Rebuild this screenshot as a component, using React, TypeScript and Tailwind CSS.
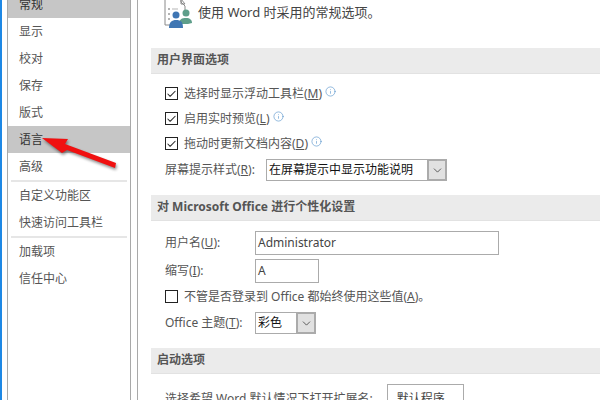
import React from 'react';
import { ChevronDown, Check, Info } from 'lucide-react';

const FONT = 'font-["Noto_Sans","Noto_Sans_CJK_SC",sans-serif]';

function NavItem({ label, active }: { label: string; active?: boolean }) {
  return (
    <div className={`h-[27px] pl-[11px] flex items-center text-[12px] ${active ? 'bg-[#c6c6c6] text-[#333]' : 'text-[#555]'}`}>
      {label}
    </div>
  );
}

function NavSep() {
  return <div className="h-[2px] mx-[3px] bg-[#e6e6e6]" />;
}

function SectionHead({ children }: { children: React.ReactNode }) {
  return (
    <div className="h-[26px] pl-[6px] pb-[1px] flex items-center bg-[#ebebeb] border-b border-[#e2e2e2] text-[12px] font-bold text-[#555]">
      {children}
    </div>
  );
}

function CheckRow({ label, checked, tip }: { label: React.ReactNode; checked?: boolean; tip?: boolean }) {
  return (
    <div className="h-[25px] flex items-center pl-[14px]">
      <div className="w-[13px] h-[13px] border border-[#222] flex items-center justify-center bg-white">
        {checked && <Check size={12} strokeWidth={2.2} className="text-[#222]" />}
      </div>
      <span className="ml-[6px] text-[12px] text-[#555]">{label}</span>
      {tip && <Info size={11} strokeWidth={1.2} className="ml-[3px] mb-[5px] text-[#3f84c4]" />}
    </div>
  );
}

function Select({ text, width }: { text: string; width: string }) {
  return (
    <div className={`h-[22px] flex items-stretch ${width}`}>
      <div className="flex-1 border-y border-l border-[#ababab] flex items-center pl-[2px] text-[12px] text-[#111]">{text}</div>
      <div className="w-[20px] bg-[#e1e1e1] border-2 border-[#ababab] flex items-center justify-center">
        <ChevronDown size={13} strokeWidth={1.4} className="text-[#333]" />
      </div>
    </div>
  );
}

export default function App() {
  return (
    <div className={`relative w-[600px] h-[400px] overflow-hidden bg-white flex ${FONT}`}>
      <div className="w-[2px] bg-[#1e88e5]" />
      {/* left nav */}
      <div className="ml-[5px] w-[124px] h-[400px] border-x border-[#a9a9a9]">
        <div className="-mt-[9px]">
          <NavItem label="常规" active />
          <NavItem label="显示" />
          <NavItem label="校对" />
          <NavItem label="保存" />
          <NavItem label="版式" />
          <NavItem label="语言" active />
          <NavItem label="高级" />
          <NavSep />
          <NavItem label="自定义功能区" />
          <NavItem label="快速访问工具栏" />
          <NavSep />
          <NavItem label="加载项" />
          <NavItem label="信任中心" />
        </div>
      </div>
      {/* options panel */}
      <div className="ml-[6px] flex-1 h-[400px] border-l border-[#a9a9a9] pl-[13px] overflow-hidden">
        <div className="h-[48px] flex items-start">
          <svg width="28" height="30" viewBox="0 0 28 30" className="ml-[13px] -mt-[1px]">
            <path d="M1 0V26H6M17 0V3L21 7V11" fill="none" stroke="#8a8a8a" />
            <path d="M17 0L21 5H17Z" fill="none" stroke="#8a8a8a" />
            <circle cx="5" cy="10" r="1" fill="#9a9a9a" />
            <circle cx="5" cy="15" r="1" fill="#9a9a9a" />
            <circle cx="5" cy="20" r="1" fill="#9a9a9a" />
            <path d="M8 10H14" stroke="#b5b5b5" />
            <circle cx="22" cy="14" r="3.5" fill="#5e9e8a" />
            <path d="M15 25C15 20 18 19 22 19C26 19 28 21 28 24L24 25Z" fill="#5e9e8a" />
            <circle cx="12" cy="16" r="3.5" fill="#3f76b3" />
            <path d="M5 29C5 23 8 21 12 21C17 21 19 23 19 29Z" fill="#3f76b3" />
          </svg>
          <span className="ml-[6px] mt-[3px] text-[13px] text-[#444]">使用 Word 时采用的常规选项。</span>
        </div>
        <SectionHead>用户界面选项</SectionHead>
        <div className="pt-[7px]">
          <CheckRow checked tip label={<>选择时显示浮动工具栏(<u>M</u>)</>} />
          <CheckRow checked tip label={<>启用实时预览(<u>L</u>)</>} />
          <CheckRow checked tip label={<>拖动时更新文档内容(<u>D</u>)</>} />
          <div className="flex items-center pl-[14px] h-[22px] mt-[3px]">
            <span className="w-[101px] text-[12px] text-[#555]">屏幕提示样式(<u>R</u>):</span>
            <Select text="在屏幕提示中显示功能说明" width="w-[181px]" />
          </div>
        </div>
        <div className="mt-[14px]">
          <SectionHead>对 Microsoft Office 进行个性化设置</SectionHead>
        </div>
        <div className="pt-[10px]">
          <div className="flex items-center pl-[14px]">
            <span className="w-[90px] text-[12px] text-[#555]">用户名(<u>U</u>):</span>
            <div className="w-[244px] h-[24px] border border-[#ababab] pl-[2px] flex items-center text-[12px] text-[#444]">Administrator</div>
          </div>
          <div className="flex items-center pl-[14px] mt-[4px]">
            <span className="w-[90px] text-[12px] text-[#555]">缩写(<u>I</u>):</span>
            <div className="w-[64px] h-[24px] border border-[#ababab] pl-[2px] flex items-center text-[12px] text-[#444]">A</div>
          </div>
          <div className="mt-[1px]">
            <CheckRow label={<>不管是否登录到 Office 都始终使用这些值(<u>A</u>)。</>} />
          </div>
          <div className="flex items-center pl-[14px] h-[22px] mt-[3px]">
            <span className="w-[90px] text-[12px] text-[#555]">Office 主题(<u>T</u>):</span>
            <Select text="彩色" width="w-[61px]" />
          </div>
        </div>
        <div className="mt-[14px]">
          <SectionHead>启动选项</SectionHead>
        </div>
        <div className="flex items-center pl-[14px] mt-[10px]">
          <span className="w-[222px] text-[12px] text-[#555]">选择希望 Word 默认情况下打开扩展名:</span>
          <div className="w-[77px] h-[30px] border border-[#ababab] flex items-center justify-center text-[12px] text-[#444]">默认程序...</div>
        </div>
      </div>
      {/* annotation arrow */}
      <svg width="125" height="50" viewBox="0 0 125 50" className="absolute left-0 top-[130px]">
        <path d="M42 8L68 9L65 14L116 33L115 38L67 20L62 23Z" fill="#000" opacity="0.45" transform="translate(1 2)" className="blur-[1.5px]" />
        <path d="M42 8L68 9L65 14L116 33L115 38L67 20L62 23Z" fill="#f01010" />
      </svg>
    </div>
  );
}
